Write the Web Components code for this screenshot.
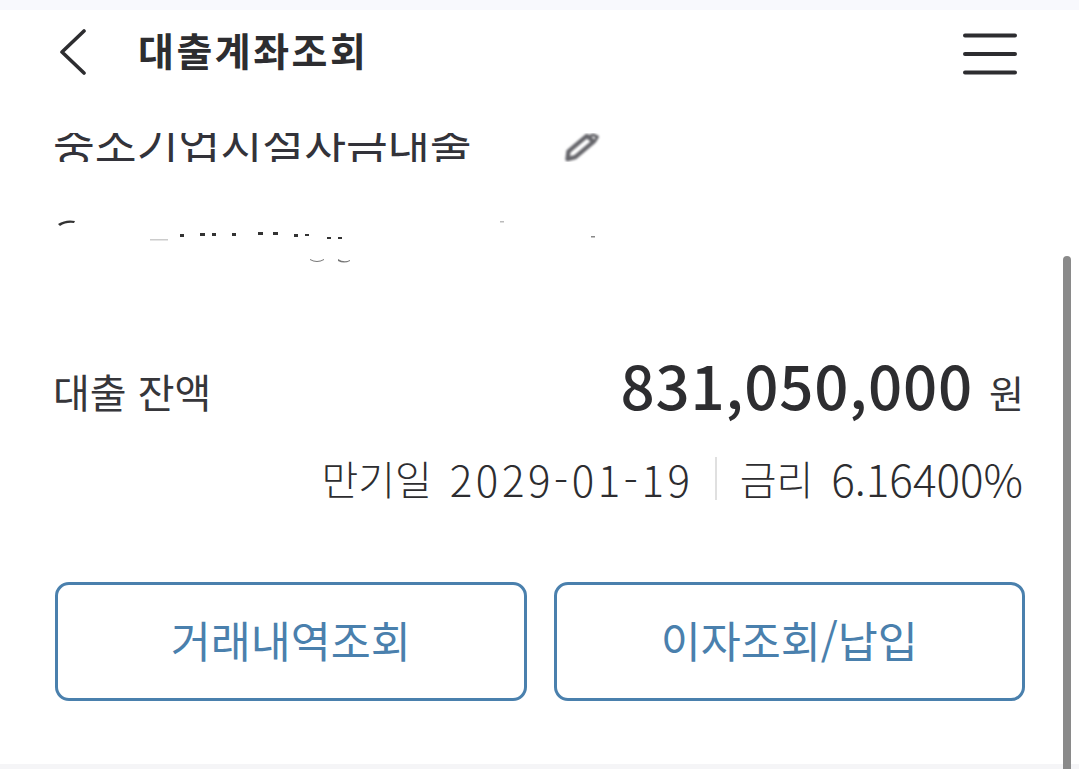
<!DOCTYPE html>
<html lang="ko">
<head>
<meta charset="utf-8">
<title>대출계좌조회</title>
<style>
    html, body { margin: 0; height: 100%; background: #fff; }
    body { overflow: hidden; font-family: "Noto Sans CJK KR", "Noto Sans", sans-serif; color: #2d2d30; }
    [slot="actions"] { display: flex; gap: 27px; margin-top: 82px; padding: 0 54px 0 55px; }
</style>
</head>
<body>
<loan-page>
    <app-header title="대출계좌조회"></app-header>
    <loan-title name="중소기업시설자금대출"></loan-title>
    <loan-balance label="대출 잔액" amount="831,050,000" unit="원"></loan-balance>
    <loan-meta due="2029-01-19" rate="6.16400%"></loan-meta>
    <div slot="actions">
        <action-button>거래내역조회</action-button>
        <action-button>이자조회/납입</action-button>
    </div>
</loan-page>

<script>
class LoanPage extends HTMLElement {
    constructor() {
        super();
        this.attachShadow({ mode: 'open' });
        this.shadowRoot.innerHTML = `
            <style>
                :host {
                    display: flex;
                    flex-direction: column;
                    position: relative;
                    height: 769px;
                    overflow: hidden;
                    background: #fff;
                }
                .top { height: 10px; background: #f8f9fd; }
                main { flex: 1; display: flex; flex-direction: column; }
                .bottom { height: 5px; background: #f5f5f7; }
                .scrollbar {
                    position: absolute;
                    left: 1063px;
                    top: 256px;
                    bottom: 0;
                    width: 8px;
                    border-radius: 4px 4px 0 0;
                    background: #8a8a8a;
                }
            </style>
            <div class="top"></div>
            <main><slot></slot><slot name="actions"></slot></main>
            <div class="bottom"></div>
            <div class="scrollbar"></div>
        `;
    }
}

class AppHeader extends HTMLElement {
    constructor() {
        super();
        this.attachShadow({ mode: 'open' });
    }

    connectedCallback() {
        this.shadowRoot.innerHTML = `
            <style>
                :host {
                    display: flex;
                    align-items: center;
                    height: 82px;
                    padding: 0 62px 0 59px;
                }
                h1 {
                    flex: 1;
                    margin: 0 0 4px 51px;
                    font-size: 39px;
                    line-height: 78px;
                    font-weight: 700;
                    letter-spacing: 2.500px;
                    color: #2d2d30;
                }
                svg { display: block; }
                .back { margin-top: 2px; }
                .menu { margin-top: 5px; }
            </style>
            <svg class="back" width="28" height="46" viewBox="0 0 28 46" fill="none" stroke="#2d2d30" stroke-width="3.6" stroke-linecap="round" stroke-linejoin="round">
                <path d="M25 2 3 23l22 21"/>
            </svg>
            <h1>${this.getAttribute('title')}</h1>
            <svg class="menu" width="54" height="44" viewBox="0 0 54 44" fill="none" stroke="#2d2d30" stroke-width="4" stroke-linecap="round">
                <path d="M2 3.500h50M2 22h50M2 40.500h50"/>
            </svg>
        `;
    }
}

class LoanTitle extends HTMLElement {
    constructor() {
        super();
        this.attachShadow({ mode: 'open' });
    }

    connectedCallback() {
        this.shadowRoot.innerHTML = `
            <style>
                :host {
                    display: block;
                    padding: 41px 55px 0 53px;
                }
                .clip {
                    display: flex;
                    align-items: flex-end;
                    height: 29px;
                    overflow: hidden;
                }
                .name {
                    font-size: 45.500px;
                    line-height: 50px;
                    margin-bottom: -6px;
                    white-space: nowrap;
                    color: #33333a;
                    width: 511px;
                    flex: none;
                }
                svg { display: block; flex: none; filter: blur(1px); }
                .masked { display: block; margin: 54px 0 0 -53px; }
            </style>
            <div class="clip">
                <span class="name">${this.getAttribute('name')}</span>
                <svg width="38" height="29" viewBox="0 0 38 30" fill="none" stroke="#66666b" stroke-width="4.500" stroke-linejoin="round">
                    <path d="M3 27 4 19 23 3l7 6-19 16z"/>
                    <path d="M26 3l4-1 4 2-3 5" stroke-width="3"/>
                </svg>
            </div>
            <svg class="masked" width="620" height="50" viewBox="0 0 620 50" fill="#333" style="filter:none">
                <path d="M58 8q8-5 17-3l-1 2q-8-1-14 3z"/>
                <rect x="150" y="23" width="18" height="1.500" fill="#ccc"/>
                <rect x="180" y="18" width="4" height="3"/><rect x="200" y="17" width="5" height="3"/>
                <rect x="212" y="17" width="4" height="3"/><rect x="232" y="17" width="4" height="3"/>
                <rect x="258" y="16" width="5" height="3"/><rect x="273" y="16" width="5" height="3"/>
                <rect x="294" y="18" width="4" height="3"/><rect x="305" y="18" width="4" height="2"/>
                <rect x="327" y="21" width="4" height="2"/><rect x="338" y="21" width="4" height="2"/>
                <rect x="500" y="5" width="4" height="1.500" fill="#bbb"/>
                <rect x="591" y="20" width="4" height="1.500" fill="#888"/>
                <path d="M310 43q7 4 14 0v1q-7 4-14 0zM338 43q6 4 12 1v1q-6 3-12 0z" fill="#777"/>
            </svg>
        `;
    }
}

class LoanBalance extends HTMLElement {
    constructor() {
        super();
        this.attachShadow({ mode: 'open' });
    }

    connectedCallback() {
        this.shadowRoot.innerHTML = `
            <style>
                :host {
                    display: flex;
                    align-items: center;
                    justify-content: space-between;
                    height: 80px;
                    margin-top: 80px;
                    padding: 0 55px 0 53px;
                }
                .label { font-size: 40px; margin-top: 10px; color: #36363a; }
                .amount { font-size: 60px; font-weight: 500; letter-spacing: 0.800px; margin-bottom: 6px; color: #2d2d30; }
                .unit { font-size: 38px; margin: 10px 0 0 16px; color: #36363a; }
                .right { display: flex; align-items: center; }
            </style>
            <span class="label">${this.getAttribute('label')}</span>
            <span class="right">
                <span class="amount">${this.getAttribute('amount')}</span>
                <span class="unit">${this.getAttribute('unit')}</span>
            </span>
        `;
    }
}

class LoanMeta extends HTMLElement {
    constructor() {
        super();
        this.attachShadow({ mode: 'open' });
    }

    connectedCallback() {
        this.shadowRoot.innerHTML = `
            <style>
                :host {
                    display: flex;
                    align-items: center;
                    justify-content: flex-end;
                    height: 44px;
                    margin-top: 30px;
                    padding: 0 56px;
                    font-size: 40px;
                    font-weight: 300;
                    color: #2d2d30;
                    white-space: nowrap;
                }
                .val { margin-left: 18px; font-size: 44px; }
                .date { font-size: 42px; letter-spacing: 3.600px; }
                .sep { width: 2px; height: 43px; margin: 0 23px 0 21px; background: #e0e0e0; }
            </style>
            <span>만기일</span><span class="val date">${this.getAttribute('due')}</span>
            <span class="sep"></span>
            <span>금리</span><span class="val">${this.getAttribute('rate')}</span>
        `;
    }
}

class ActionButton extends HTMLElement {
    constructor() {
        super();
        this.attachShadow({ mode: 'open' });
        this.shadowRoot.innerHTML = `
            <style>
                :host {
                    display: flex;
                    align-items: center;
                    justify-content: center;
                    flex: 1;
                    box-sizing: border-box;
                    height: 119px;
                    padding-bottom: 5px;
                    border: 3px solid #4a80ad;
                    border-radius: 14px;
                    font-size: 43.500px;
                    color: #4a80ad;
                    background: #fff;
                }
            </style>
            <slot></slot>
        `;
    }
}

customElements.define('loan-page', LoanPage);
customElements.define('app-header', AppHeader);
customElements.define('loan-title', LoanTitle);
customElements.define('loan-balance', LoanBalance);
customElements.define('loan-meta', LoanMeta);
customElements.define('action-button', ActionButton);
</script>
</body>
</html>
